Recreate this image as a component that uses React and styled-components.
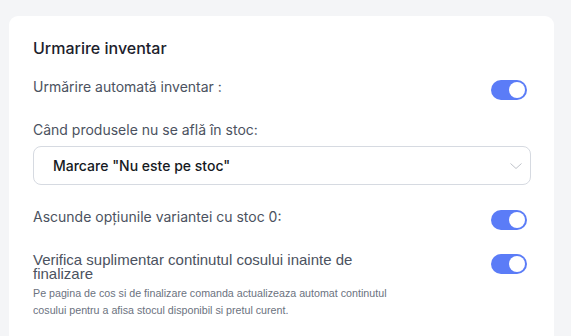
import React, { useState } from "react";
import styled, { createGlobalStyle } from "styled-components";

const Global = createGlobalStyle`
  html, body { margin: 0; padding: 0; background: #f4f5f7; }
  body { font-family: Inter, "Noto Sans", sans-serif; }
`;

const Page = styled.main`
  padding: 16px 17px 0 9px;
  height: 336px;
  overflow: hidden;
  box-sizing: border-box;
`;

const Card = styled.section`
  background: #fff;
  border-radius: 9px;
  padding: 22px 23px 24px 24px;
  min-height: 340px;
  box-sizing: border-box;
`;

const Title = styled.h2`
  margin: 0 0 19px;
  font-size: 16px;
  font-weight: 500;
  line-height: 20px;
  color: #1c212c;
`;

const Row = styled.div`
  display: flex;
  align-items: flex-start;
  justify-content: space-between;
  margin-bottom: ${(p) => p.$mb || 0}px;
`;

const Label = styled.div`
  font-size: 14px;
  line-height: 20px;
  color: #4b5260;
`;

const FieldLabel = styled(Label)`
  margin-bottom: 6px;
`;

const Block = styled.div`
  max-width: 360px;
  padding-top: 2px;
`;

const BigLabel = styled.div`
  font-family: "Liberation Sans", Arial, sans-serif;
  font-size: 15px;
  line-height: 14px;
  color: #4b5260;
`;

const Help = styled.p`
  margin: 4px 0 0;
  font-family: "Liberation Sans", Arial, sans-serif;
  font-size: 10.7px;
  line-height: 17px;
  color: #6b7280;
`;

const SelectBox = styled.div`
  height: 39px;
  border: 1px solid #d6dae1;
  border-radius: 8px;
  box-sizing: border-box;
  display: flex;
  align-items: center;
  justify-content: space-between;
  padding: 0 7px 0 19px;
  margin-bottom: 22px;
  font-size: 14px;
  font-weight: 500;
  color: #151922;
`;

const Toggle = styled.button`
  width: 36px;
  height: 20px;
  border: none;
  border-radius: 10px;
  padding: 0;
  margin: 3px 4px 0 0;
  flex: none;
  cursor: pointer;
  position: relative;
  background: ${(p) => (p.$on ? "#5b7cf7" : "#d1d5db")};
  &::after {
    content: "";
    position: absolute;
    top: 2px;
    left: ${(p) => (p.$on ? "18px" : "2px")};
    width: 16px;
    height: 16px;
    border-radius: 50%;
    background: #fff;
  }
`;

function Switch({ initial = true }) {
  const [on, setOn] = useState(initial);
  return <Toggle $on={on} onClick={() => setOn(!on)} aria-pressed={on} />;
}

export default function App() {
  return (
    <>
      <Global />
      <Page>
        <Card>
          <Title>Urmarire inventar</Title>
          <Row $mb={20}>
            <Label>Urmărire automată inventar :</Label>
            <Switch />
          </Row>
          <FieldLabel>Când produsele nu se află în stoc:</FieldLabel>
          <SelectBox>
            <span>Marcare "Nu este pe stoc"</span>
            <svg width="14" height="8" viewBox="0 0 14 8" fill="none">
              <path d="M1.5 1.5l5.5 5 5.5-5" stroke="#bfc3ca" strokeWidth="1" />
            </svg>
          </SelectBox>
          <Row $mb={21}>
            <Label>Ascunde opțiunile variantei cu stoc 0:</Label>
            <Switch />
          </Row>
          <Row>
            <Block>
              <BigLabel>Verifica suplimentar continutul cosului inainte de finalizare</BigLabel>
              <Help>
                Pe pagina de cos si de finalizare comanda actualizeaza automat continutul
                cosului pentru a afisa stocul disponibil si pretul curent.
              </Help>
            </Block>
            <Switch />
          </Row>
        </Card>
      </Page>
    </>
  );
}
